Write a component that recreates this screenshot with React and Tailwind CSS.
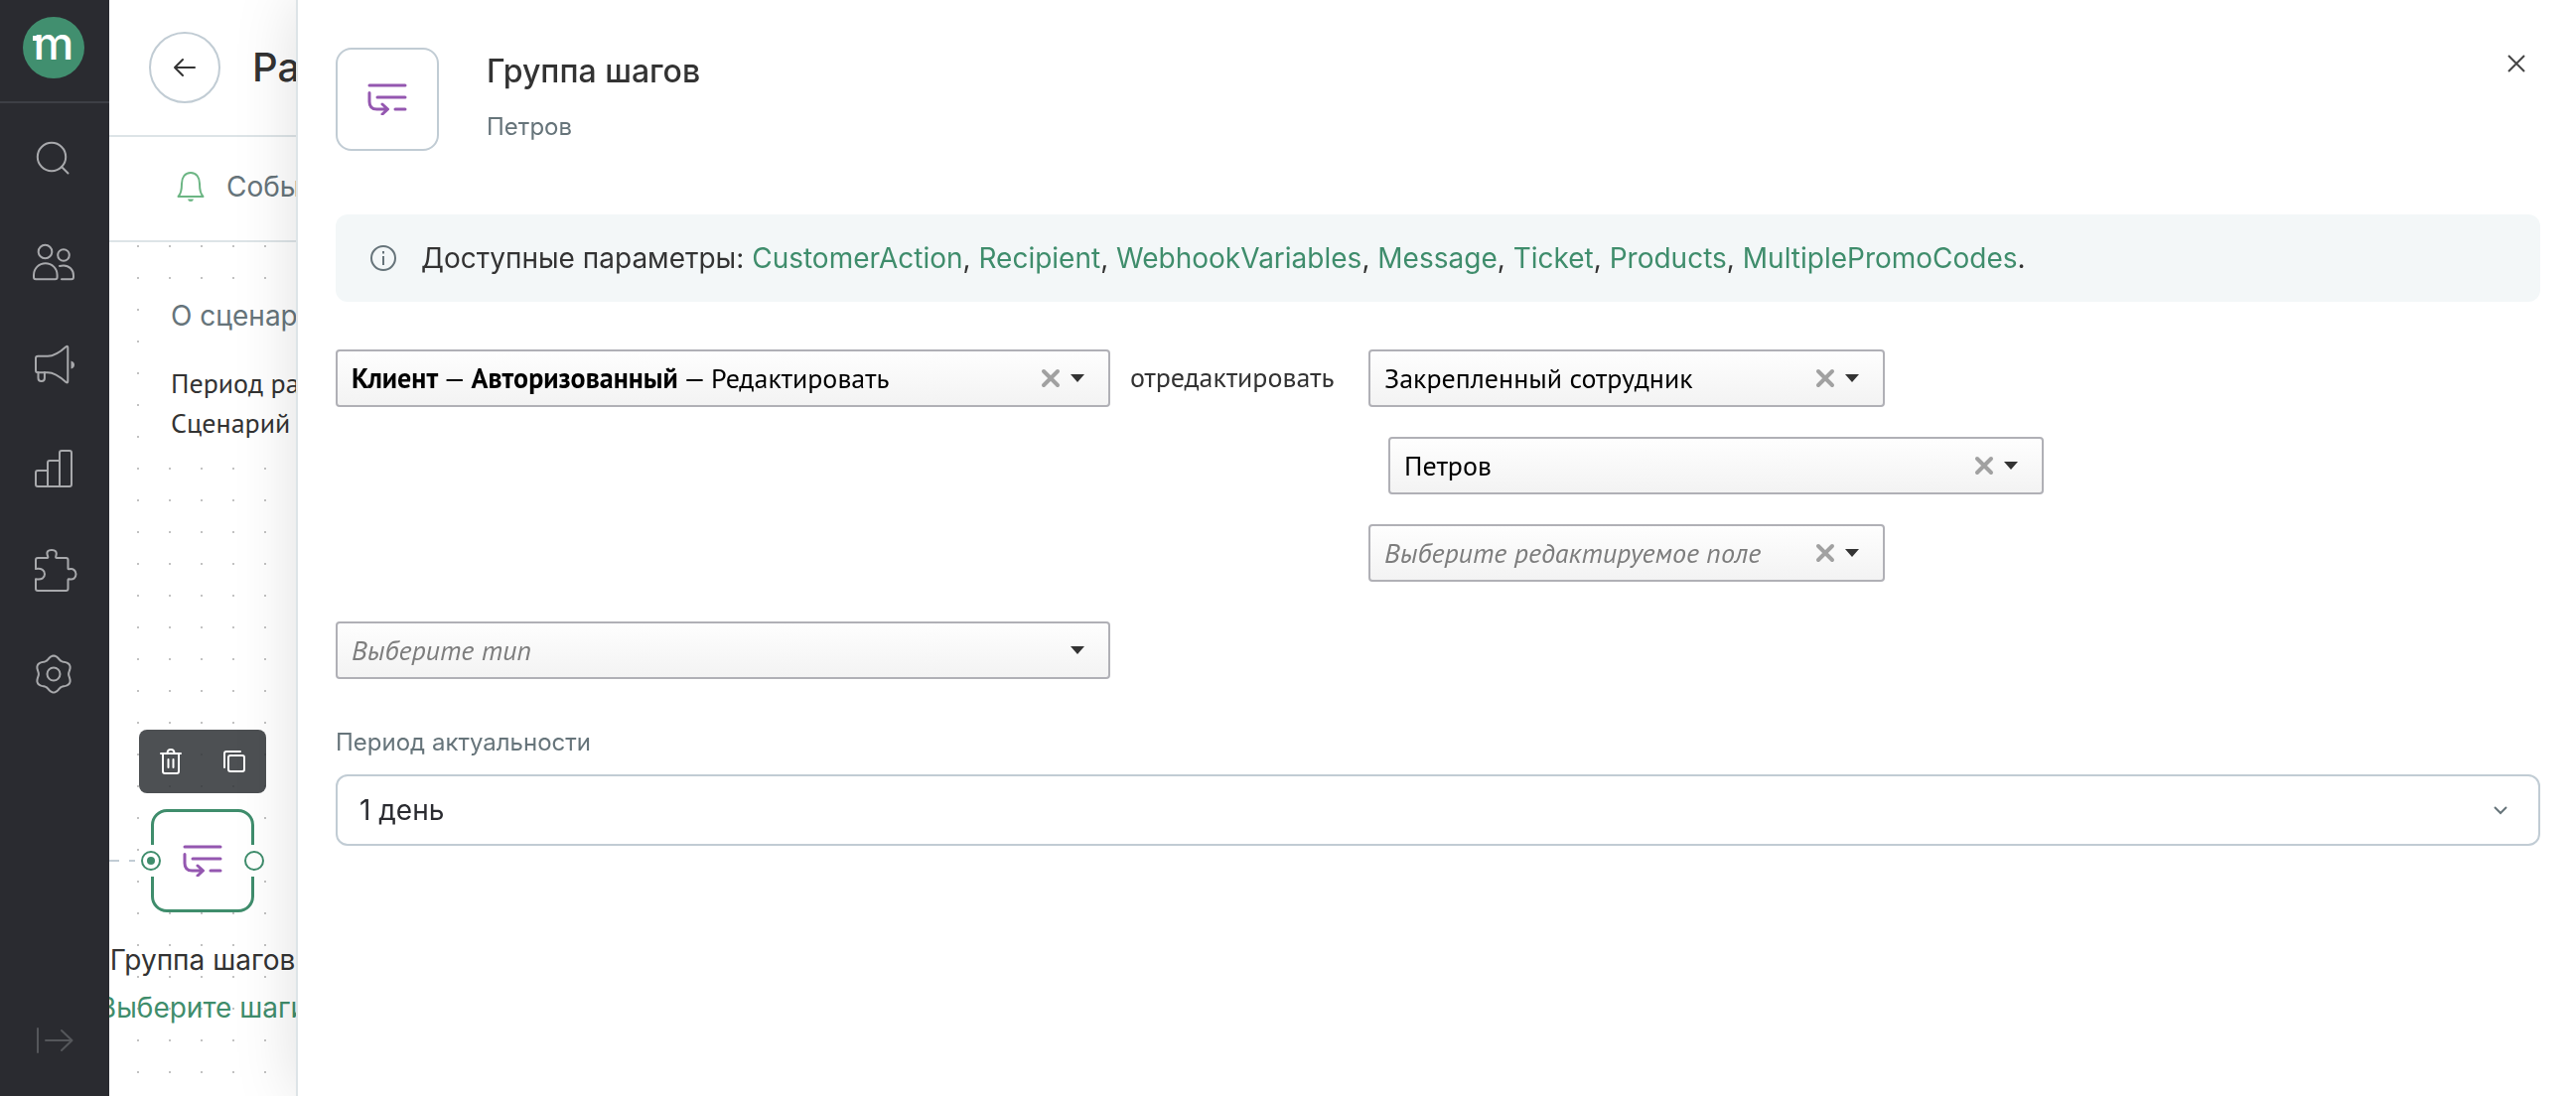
import { useState } from "react";
import clsx from "clsx";

const params = ["CustomerAction", "Recipient", "WebhookVariables", "Message", "Ticket", "Products", "MultiplePromoCodes"];

// six-lobed outline for the settings icon
const gearPath =
  Array.from({ length: 72 }, (_, i) => {
    const a = (i * Math.PI) / 36;
    const r = 16.8 + 1.7 * Math.cos(6 * a);
    return `${i ? "L" : "M"}${(22 + r * Math.sin(a)).toFixed(2)} ${(22 - r * Math.cos(a)).toFixed(2)}`;
  }).join("") + "Z";

const navItems = [
  {
    label: "Поиск",
    icon: (
      <>
        <circle cx="20" cy="21" r="14.2" />
        <path d="M30 31l6.5 6.5" />
      </>
    ),
  },
  {
    label: "Клиенты",
    icon: (
      <>
        <circle cx="13.5" cy="12.5" r="6.8" />
        <circle cx="32" cy="16" r="5.8" />
        <path d="M2 36a11.8 11.8 0 0 1 23.6 0v2.3q0 2-2 2H4q-2 0-2-2z" />
        <path d="M28 27q1.8-.6 4-.6a10 10 0 0 1 10 10v1.9q0 2-2 2H30" />
      </>
    ),
  },
  {
    label: "Кампании",
    icon: (
      <>
        <path d="M4 28V16q0-2.200 2.200-2.200H16c7.500 0 13-4.500 18.500-9.500q1.800-1.300 1.800.8V39q0 2.200-1.800.9C29 35 23 30.200 16 30.200H6.200Q4 30.200 4 28z" />
        <path d="M6.500 30v6q0 3 3.200 3t3.200-3v-6" />
        <path d="M39.500 18.500v8q3.500-1 3.500-4t-3.500-4z" fill="currentColor" stroke="none" />
      </>
    ),
  },
  {
    label: "Отчёты",
    icon: (
      <>
        <path d="M16 41H6q-2 0-2-2V27q0-2 2-2h10" />
        <path d="M16 41V17q0-2 2-2h10" />
        <path d="M28 41V7q0-2 2-2h8q2 0 2 2v32q0 2-2 2H16" />
      </>
    ),
  },
  {
    label: "Интеграции",
    icon: (
      <>
        <path d="M4 20V11q0-2 2-2h9.500q1 0 .8-1.200C14 2.500 16.500 1 20 1s6 1.500 4.200 6.800Q24 9 25 9H34.500q2 0 2 2v8.500q0 1 1.200.8c4-.8 6.800 1.200 6.800 5s-2.800 6-6.800 5q-1.200-.2-1.200.8V40q0 2-2 2H6q-2 0-2-2V30.300c6 1.200 9-1.300 9-5s-3-6.200-9-5.300z" />
      </>
    ),
  },
  {
    label: "Настройки",
    icon: (
      <>
        <path d={gearPath} />
        <circle cx="22" cy="22" r="6.500" />
      </>
    ),
  },
];

function StepsIcon() {
  return (
    <svg width="40" height="32" viewBox="0 0 40 32" fill="none" stroke="#9457b0" strokeWidth="3" strokeLinecap="round" strokeLinejoin="round" aria-hidden="true">
      <path d="M2 2h36M10 14h28M28 26h10M2 9.500v9q0 7.500 7.500 7.500H20M15 21l5.500 5-5.500 5" />
    </svg>
  );
}

function Sidebar() {
  return (
    <aside className="flex w-[110px] shrink-0 flex-col bg-[#2a2b30] text-[#a8a9ac]">
      <div className="flex h-[104px] justify-center border-b-2 border-[#3d3f45] pt-4">
        <svg width="64" height="64" viewBox="0 0 64 64" role="img" aria-label="mindbox">
          <circle cx="31" cy="32" r="31" fill="#418f6f" />
          <rect x="10" y="20" width="6" height="5" fill="#fff" />
          <text x="31" y="44" textAnchor="middle" fill="#fff" className="font-['Inter'] text-[46px] font-medium">
            m
          </text>
        </svg>
      </div>
      <nav className="flex flex-1 flex-col items-center gap-[60px] pt-[33px]">
        {navItems.map((item) => (
          <a key={item.label} href="#" aria-label={item.label}>
            <svg width="46" height="44" viewBox="0 0 46 44" fill="none" stroke="currentColor" strokeWidth="2" strokeLinecap="round" strokeLinejoin="round">
              {item.icon}
            </svg>
          </a>
        ))}
      </nav>
      <button type="button" aria-label="Развернуть меню" className="mb-[34px] self-center text-[#55575b]">
        <svg width="38" height="44" viewBox="0 0 38 44" fill="none" stroke="currentColor" strokeWidth="2" strokeLinecap="round" strokeLinejoin="round">
          <path d="M2 10v24M10 22h26M26 12l10.500 10L26 32" />
        </svg>
      </button>
    </aside>
  );
}

function Workspace() {
  return (
    <main className="flex min-w-0 flex-1 flex-col overflow-hidden font-['Inter',sans-serif] whitespace-nowrap">
      <header className="flex h-[138px] shrink-0 items-center gap-8 border-b-2 border-[#dde4e7] px-10">
        <button type="button" aria-label="Назад" className="flex size-[72px] items-center justify-center rounded-full border-2 border-[#c1ccd4]">
          <svg width="24" height="20" viewBox="0 0 24 20" fill="none" stroke="#333" strokeWidth="2" strokeLinecap="round" strokeLinejoin="round">
            <path d="M22 10H2M10 2l-8 8 8 8" />
          </svg>
        </button>
        <h1 className="text-[40px] leading-[48px] font-medium text-[#333]">Рассылка</h1>
      </header>
      <div className="flex h-[106px] shrink-0 items-center gap-5 border-b-2 border-[#dde4e7] px-[66px] pb-1 text-[28px] text-[#66747a]">
        <svg width="32" height="32" viewBox="0 0 32 32" fill="none" stroke="#6bb583" strokeWidth="2" strokeLinejoin="round" aria-hidden="true">
          <path d="M3.500 26c2-2 3.500-6 3.500-13 0-6 3-11 9-11s9 5 9 11c0 7 1.500 11 3.500 13z" />
          <path d="M13 28.500h6q-.5 2.500-3 2.500t-3-2.500z" fill="#6bb583" stroke="none" />
        </svg>
        <span>Событие</span>
      </div>
      <div className="relative flex-1 bg-[radial-gradient(circle,#c2c2c2_1px,transparent_1px)] bg-[size:32px_32px] bg-[position:13px_-12px]">
        <section className="mt-[56px] ml-10 bg-white pb-3 pl-[22px]">
          <h2 className="text-[28px] leading-9 text-[#66747a]">О сценарии</h2>
          <p className="mt-[30px] font-['PT_Sans',Lato,sans-serif] text-[28px] leading-10 text-[#333]">
            Период работы
            <br />
            Сценарий
          </p>
        </section>

        <svg width="30" height="4" viewBox="0 0 30 4" className="absolute top-[621px] left-0" aria-hidden="true">
          <path d="M0 2h10M20 2h6" stroke="#c1ccd4" strokeWidth="2" />
        </svg>
        <div className="absolute top-[491px] left-[30px] flex h-16 w-32 items-center justify-around rounded-lg bg-[#323639]/87 text-white">
          <button type="button" aria-label="Удалить">
            <svg width="24" height="28" viewBox="0 0 24 28" fill="none" stroke="currentColor" strokeWidth="2" strokeLinecap="round" strokeLinejoin="round">
              <path d="M2 6h20M4 6v18q0 2 2 2h12q2 0 2-2V6M9.500 12v8M14.500 12v8M8.500 6Q8.500 2 12 2t3.500 4" />
            </svg>
          </button>
          <button type="button" aria-label="Копировать">
            <svg width="24" height="24" viewBox="0 0 24 24" fill="none" stroke="currentColor" strokeWidth="2" strokeLinecap="round" strokeLinejoin="round">
              <rect x="6" y="6" width="16" height="16" rx="2" />
              <path d="M2 18V4q0-2 2-2h14" />
            </svg>
          </button>
        </div>
        <div className="absolute top-[571px] left-[42px] size-[104px]">
          <div className="flex size-full items-center justify-center rounded-2xl border-3 border-[#3f8d6c] bg-white">
            <StepsIcon />
          </div>
          <span className="absolute top-9 -left-3 flex h-8 w-6 items-center justify-center bg-white">
            <i className="flex size-5 items-center justify-center rounded-full border-2 border-[#3f8d6c]">
              <i className="size-2 rounded-full bg-[#3f8d6c]" />
            </i>
          </span>
          <span className="absolute top-9 -right-3 flex h-8 w-6 items-center justify-center bg-white">
            <i className="size-5 rounded-full border-2 border-[#3f8d6c]" />
          </span>
        </div>
        <div className="absolute top-[699px] -left-6 w-[236px] text-center text-[28px] leading-12 text-[#333]">
          <p>Группа шагов</p>
          <a href="#" className="text-[#3f8d6c]">
            Выберите шаги
          </a>
        </div>
      </div>
    </main>
  );
}

function Combo({ label, text, rich, placeholder, clearable = true, className }) {
  const [value, setValue] = useState(text || "");
  const showRich = rich && value;

  return (
    <div className={clsx("relative h-[58px] font-['PT_Sans',Lato,sans-serif] text-[28px]", className)}>
      <select
        aria-label={label}
        value={value}
        onChange={(e) => setValue(e.target.value)}
        className={clsx(
          "size-full appearance-none rounded border-2 border-[#b0b0b6] bg-linear-to-b from-[#fefefe] to-[#f3f3f3] pr-24 pl-[14px]",
          showRich ? "text-transparent" : value ? "text-black" : "text-[#7d7d7d] italic"
        )}
      >
        <option value="">{placeholder || label}</option>
        {text && <option value={text}>{text}</option>}
      </select>
      {showRich && (
        <span aria-hidden="true" className="pointer-events-none absolute inset-y-0 left-4 flex items-center whitespace-pre text-black">
          {rich}
        </span>
      )}
      <div className="pointer-events-none absolute inset-y-0 right-[26px] flex items-center gap-[10px]">
        {clearable && (
          <button type="button" aria-label="Очистить" onClick={() => setValue("")} className="pointer-events-auto">
            <svg width="20" height="20" viewBox="0 0 20 20" fill="none" stroke="#a1a1a1" strokeWidth="4" strokeLinecap="round">
              <path d="M3 3l14 14M17 3L3 17" />
            </svg>
          </button>
        )}
        <svg width="14" height="8" viewBox="0 0 14 8" fill="#333" aria-hidden="true">
          <path d="M0 0h14L7 8z" />
        </svg>
      </div>
    </div>
  );
}

function StepDrawer() {
  return (
    <div role="dialog" aria-labelledby="drawer-title" className="fixed inset-y-0 right-0 left-[298px] overflow-y-auto border-l-2 border-[#dde4e7] bg-white pt-12 pr-9 pl-[38px] font-['Inter',sans-serif] text-[#333] shadow-[0_0_60px_rgba(0,0,0,0.13)]">
      <header className="flex items-start gap-12">
        <div className="flex size-[104px] items-center justify-center rounded-2xl border-2 border-[#c1ccd4]">
          <StepsIcon />
        </div>
        <div>
          <h2 id="drawer-title" className="text-[32px] leading-[48px] font-medium">
            Группа шагов
          </h2>
          <p className="mt-4 text-[24px] leading-8 text-[#66747a]">Петров</p>
        </div>
        <button type="button" aria-label="Закрыть" className="ml-auto flex h-8 w-12 items-center justify-center">
          <svg width="20" height="20" viewBox="0 0 20 20" fill="none" stroke="#444" strokeWidth="2">
            <path d="M2 2l16 16M18 2L2 18" />
          </svg>
        </button>
      </header>

      <div className="mt-16 flex gap-[22px] rounded-xl bg-[#f3f7f8] px-8 py-6 text-[28px] leading-10">
        <svg width="32" height="40" viewBox="0 0 32 40" fill="none" stroke="#66747a" strokeWidth="2" className="shrink-0" aria-hidden="true">
          <circle cx="16" cy="20" r="12" />
          <path d="M16 18v9M16 13v2.500" />
        </svg>
        <p>
          Доступные параметры:{" "}
          {params.map((p, i) => (
            <span key={p}>
              <a href="#" className="text-[#3f8d6c]">
                {p}
              </a>
              {i < params.length - 1 ? ", " : "."}
            </span>
          ))}
        </p>
      </div>

      <div className="mt-12 flex items-start">
        <Combo
          label="Операция"
          text="Клиент — Авторизованный — Редактировать"
          rich={
            <>
              <b>Клиент</b> — <b>Авторизованный</b> — Редактировать
            </>
          }
          className="w-[780px]"
        />
        <span className="w-[260px] pl-5 font-['PT_Sans',Lato,sans-serif] text-[28px] leading-14">отредактировать</span>
        <div className="flex flex-col gap-[30px]">
          <Combo label="Поле" text="Закрепленный сотрудник" className="w-[520px]" />
          <Combo label="Сотрудник" text="Петров" className="ml-5 w-[660px]" />
          <Combo label="Редактируемое поле" placeholder="Выберите редактируемое поле" className="w-[520px]" />
        </div>
      </div>
      <Combo label="Тип" placeholder="Выберите тип" clearable={false} className="mt-10 w-[780px]" />

      <label htmlFor="period" className="mt-12 block text-[24px] leading-8 text-[#66747a]">
        Период актуальности
      </label>
      <div className="relative mt-4">
        <select id="period" className="h-[72px] w-full appearance-none rounded-xl border-2 border-[#c1ccd4] bg-white px-[22px] text-[28px] text-[#2a2b30]">
          <option>1 день</option>
        </select>
        <svg width="16" height="10" viewBox="0 0 16 10" fill="none" stroke="#66747a" strokeWidth="2" className="pointer-events-none absolute inset-y-0 right-8 my-auto" aria-hidden="true">
          <path d="M2 2l6 6 6-6" />
        </svg>
      </div>
    </div>
  );
}

export default function App() {
  return (
    <div className="flex h-screen overflow-hidden bg-white">
      <Sidebar />
      <Workspace />
      <StepDrawer />
    </div>
  );
}
